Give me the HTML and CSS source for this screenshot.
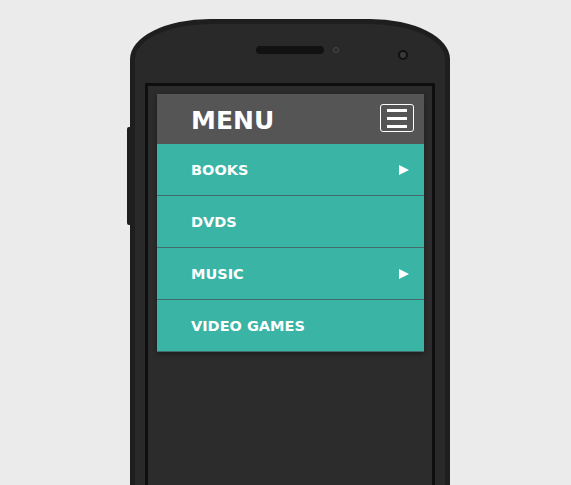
FILE: index.html
```html
<!DOCTYPE html>
<html>
<head>
<meta charset="utf-8">
<link rel="stylesheet" href="styles.css">
</head>
<body>
<div class="phone">
  <div class="side-button"></div>
  <div class="phone-top">
    <div class="speaker"></div>
    <div class="sensor"></div>
    <div class="camera"></div>
  </div>
  <div class="screen">
    <nav class="menu">
      <div class="menu-header">
        <span class="menu-title">MENU</span>
        <div class="burger"><span></span><span></span><span></span></div>
      </div>
      <ul class="menu-list">
        <li class="menu-item"><span>BOOKS</span><i class="arrow"></i></li>
        <li class="menu-item"><span>DVDS</span></li>
        <li class="menu-item"><span>MUSIC</span><i class="arrow"></i></li>
        <li class="menu-item"><span>VIDEO GAMES</span></li>
      </ul>
    </nav>
  </div>
</div>
</body>
</html>
```

FILE: styles.css
```css
html, body {
  margin: 0;
  padding: 0;
  background: #ebebeb;
  overflow: hidden;
}

.phone {
  position: relative;
  box-sizing: border-box;
  width: 320px;
  height: 466px;
  margin: 19px 0 0 130px;
  background: #292929;
  border: 5px solid #1e1e1e;
  border-bottom: 0;
  border-radius: 80px 80px 0 0 / 40px 40px 0 0;
  padding: 0 10px;
  display: flex;
  flex-direction: column;
}

.side-button {
  position: absolute;
  left: -8px;
  top: 103px;
  width: 5px;
  height: 98px;
  background: #1e1e1e;
  border-radius: 2px 0 0 2px;
}

.phone-top {
  height: 59px;
  flex: none;
  box-sizing: border-box;
  padding: 22px 0 0 111px;
  display: flex;
  align-items: flex-start;
}

.speaker {
  width: 68px;
  height: 8px;
  border-radius: 4px;
  background: #111111;
}

.sensor {
  width: 4px;
  height: 4px;
  margin: 1px 0 0 9px;
  border: 1px solid #4a4a4a;
  border-radius: 50%;
}

.camera {
  width: 6px;
  height: 6px;
  margin: 4px 0 0 59px;
  border-radius: 50%;
  background: #3a3a3a;
  border: 2px solid #111111;
}

.screen {
  flex: 1;
  box-sizing: border-box;
  background: #2c2c2c;
  border: 3px solid #0e0e0e;
  border-bottom: 0;
  border-radius: 2px 2px 0 0;
  padding: 8px 8px 0 9px;
}

.menu {
  box-shadow: 0 2px 5px rgba(0, 0, 0, 0.35);
}

.menu-header {
  height: 50px;
  background: #555555;
  display: flex;
  align-items: center;
  justify-content: space-between;
  padding: 0 10px 0 34px;
}

.menu-title {
  font-family: "DejaVu Sans", Verdana, sans-serif;
  font-weight: bold;
  font-size: 25px;
  color: #ffffff;
  line-height: 1;
  margin-top: 2px;
}

.burger {
  box-sizing: border-box;
  width: 34px;
  height: 28px;
  border: 1px solid #ffffff;
  border-radius: 3px;
  display: flex;
  flex-direction: column;
  justify-content: center;
  align-items: center;
  gap: 5px;
  margin-top: -2px;
}

.burger span {
  display: block;
  width: 20px;
  height: 3px;
  background: #ffffff;
}

.menu-list {
  list-style: none;
  margin: 0;
  padding: 0;
}

.menu-item {
  box-sizing: border-box;
  height: 52px;
  background: #39b4a5;
  border-bottom: 1px solid #46696a;
  display: flex;
  align-items: center;
  justify-content: space-between;
  padding: 0 15px 0 34px;
  font-family: "DejaVu Sans", Verdana, sans-serif;
  font-weight: bold;
  font-size: 14.5px;
  color: #ffffff;
}

.arrow {
  width: 0;
  height: 0;
  border-left: 10px solid #ffffff;
  border-top: 5px solid transparent;
  border-bottom: 5px solid transparent;
}
```
